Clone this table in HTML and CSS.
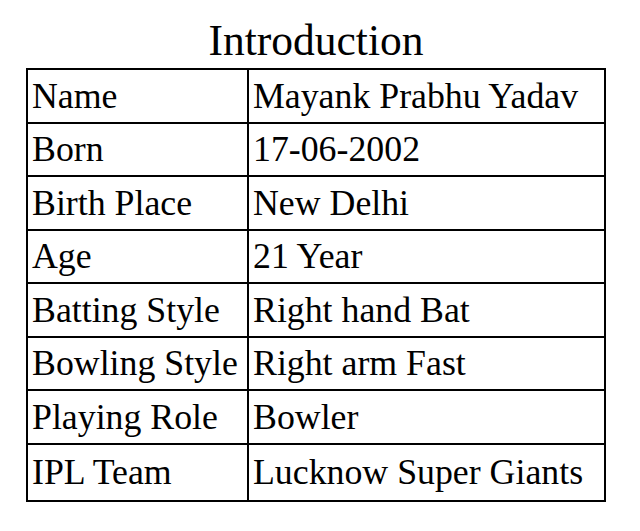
FILE: index.html
```html
<!DOCTYPE html>
<html>
<head>
<meta charset="utf-8">
<link rel="stylesheet" href="styles.css">
</head>
<body>
<table class="intro">
  <caption class="intro-title">Introduction</caption>
  <colgroup><col class="c1"><col class="c2"></colgroup>
  <tr><td>Name</td><td>Mayank Prabhu Yadav</td></tr>
  <tr><td>Born</td><td>17-06-2002</td></tr>
  <tr><td>Birth Place</td><td>New Delhi</td></tr>
  <tr><td>Age</td><td>21 Year</td></tr>
  <tr><td>Batting Style</td><td>Right hand Bat</td></tr>
  <tr><td>Bowling Style</td><td>Right arm Fast</td></tr>
  <tr><td>Playing Role</td><td>Bowler</td></tr>
  <tr class="last"><td>IPL Team</td><td>Lucknow Super Giants</td></tr>
</table>
</body>
</html>
```
FILE: styles.css
```css
html, body {
  margin: 0;
  padding: 0;
  background: #fff;
}
body {
  padding-top: 16px;
  font-family: "Liberation Serif", "Times New Roman", serif;
  color: #000;
}
.intro {
  margin-left: 26px;
  width: 580px;
  border-collapse: collapse;
  table-layout: fixed;
  font-size: 35.8px;
}
.intro-title {
  font-size: 43.5px;
  line-height: 49px;
  padding-bottom: 3px;
  text-align: center;
}
.c1 { width: 221px; }
.c2 { width: 357px; }
.intro td {
  border: 2px solid #000;
  height: 51.5px;
  padding: 0 4px 0 4px;
  line-height: 40px;
  vertical-align: middle;
  white-space: nowrap;
  overflow: hidden;
}
.intro tr.last td {
  height: 55px;
}
```
